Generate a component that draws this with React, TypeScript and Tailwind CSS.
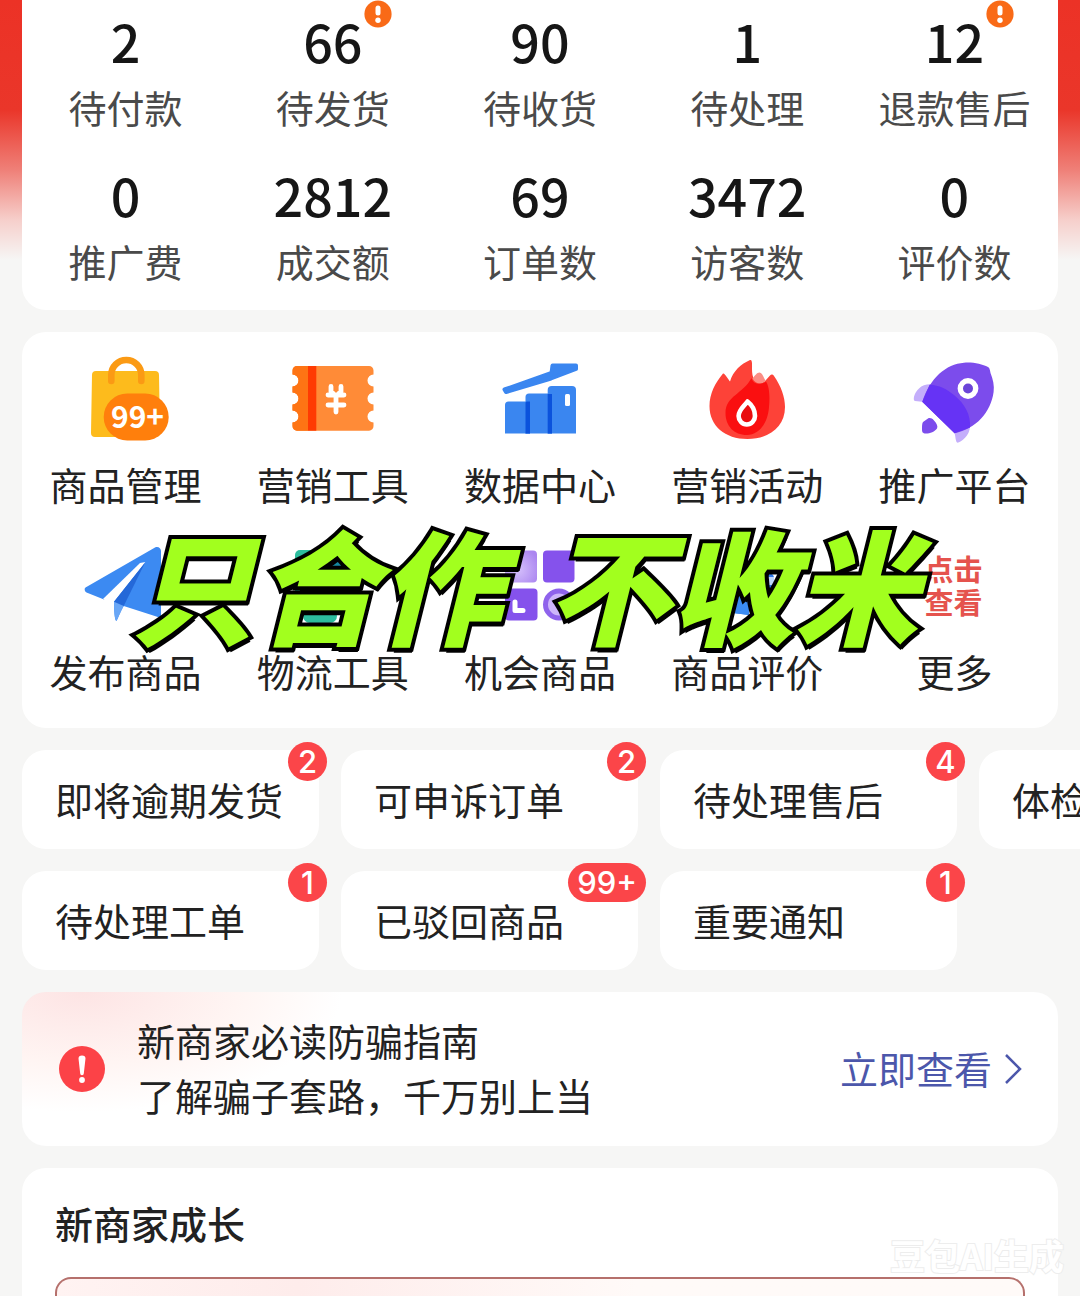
import type { ReactNode } from 'react'

type Stat = { value: string; label: string; alert?: boolean }

const stats: Stat[] = [
  { value: '2', label: '待付款' },
  { value: '66', label: '待发货', alert: true },
  { value: '90', label: '待收货' },
  { value: '1', label: '待处理' },
  { value: '12', label: '退款售后', alert: true },
  { value: '0', label: '推广费' },
  { value: '2812', label: '成交额' },
  { value: '69', label: '订单数' },
  { value: '3472', label: '访客数' },
  { value: '0', label: '评价数' },
]

const todoRows = [
  [
    { label: '即将逾期发货', badge: '2' },
    { label: '可申诉订单', badge: '2' },
    { label: '待处理售后', badge: '4' },
    { label: '体检中心', badge: '' },
  ],
  [
    { label: '待处理工单', badge: '1' },
    { label: '已驳回商品', badge: '99+' },
    { label: '重要通知', badge: '1' },
  ],
]

function Icon({ children }: { children: ReactNode }) {
  return (
    <svg viewBox="0 0 88 88" className="w-22 h-22 overflow-visible" aria-hidden="true">
      {children}
    </svg>
  )
}

function BagIcon() {
  return (
    <Icon>
      <path d="M14 15H73a4 4 0 0 1 4 4L78 77a4 4 0 0 1-4 4H13a4 4 0 0 1-4-4L10 19a4 4 0 0 1 4-4Z" fill="#fdbb1c" />
      <path d="M29.300 25V19a15 15 0 0 1 30 0V25" fill="none" stroke="#fb9a14" strokeWidth="6.600" strokeLinecap="round" />
      <rect x="21.700" y="37.500" width="65" height="47" rx="23.500" fill="#ff7f0c" />
      <text x="55.500" y="72" textAnchor="middle" fill="#fff" fontSize="30" fontWeight="700" fontFamily="Noto Sans CJK SC, sans-serif">
        99+
      </text>
    </Icon>
  )
}

function TicketIcon() {
  return (
    <Icon>
      <path
        d="M8 10H80a4.500 4.500 0 0 1 4.500 4.500V18.500a6 6 0 0 0 0 12v6a6 6 0 0 0 0 12v6a6 6 0 0 0 0 12V70a4.500 4.500 0 0 1-4.500 4.700H8a4.500 4.500 0 0 1-4.500-4.700V66.500a6 6 0 0 0 0-12v-6a6 6 0 0 0 0-12v-6a6 6 0 0 0 0-12V14.500A4.500 4.500 0 0 1 8 10Z"
        fill="#ff8b37"
      />
      <path
        d="M19 10H8a4.500 4.500 0 0 0-4.500 4.500V18.500a6 6 0 0 1 0 12v6a6 6 0 0 1 0 12v6a6 6 0 0 1 0 12V70A4.500 4.500 0 0 0 8 74.700H19Z"
        fill="#fe7414"
      />
      <rect x="19" y="10" width="8.300" height="64.700" fill="#ff3b02" />
      <path d="M42 30.500V35L45 38.500M52 30.500V35L49 38.500M39 39H55M39 49H55M47 39V56" fill="none" stroke="#fff" strokeWidth="4.800" strokeLinecap="round" />
    </Icon>
  )
}

function ChartIcon() {
  return (
    <Icon>
      <path d="M9 77.500V49a3.500 3.500 0 0 1 3.500-3.500H34V77.500Z" fill="#3a86f0" />
      <path d="M29.500 77.500V41a3.500 3.500 0 0 1 3.500-3.500H56V77.500Z" fill="#3a86f0" />
      <path d="M51.700 77.500V34a4 4 0 0 1 4-4H76a4 4 0 0 1 4 4V77.500Z" fill="#3a86f0" />
      <path d="M29.500 77.500V46.500l1-1H34V77.500ZM51.700 77.500V38H56V77.500Z" fill="#0b52dc" />
      <rect x="69" y="38" width="5" height="12" rx="1.500" fill="#fff" />
      <path d="M8.500 33.500 55.500 17 56.500 9.500H80V13L55 22.500 10 36Z" fill="#3a86f0" stroke="#3a86f0" strokeWidth="4" strokeLinejoin="round" />
    </Icon>
  )
}

function FlameIcon() {
  return (
    <Icon>
      <path
        d="M20 17.500C21.500 16.500 25 23 27 25.500C30 15 38 8 47 4C49.500 3.500 49 8 49 13C49 17 49.500 21 51.500 24C54 27.500 60 27.500 62.500 24.500L67 19.500C68.500 18 70 18.500 71 20C78 30 82 41 82 51C82 71 66 83 44.500 83C22 83 6.500 70 6.500 50C6.500 38 12 27 20 17.500Z"
        fill="#fd4238"
      />
      <path d="M49.500 22.500C52 19.500 54 16.500 56.500 16.500C59 16.500 60.500 21 62.500 24.500C59 29 53 28.500 49.500 22.500Z" fill="#fb8d85" />
      <path d="M48.500 22C50 28.500 58 29.500 63 25.500C66.500 31 67 41 66 51C65 67 56 79 44 79C31 79 22.500 70 22.500 57C22.500 40 40 38 48.500 22Z" fill="#fa0f10" />
      <path d="M44.500 45.500C49 49 52 54 52 60a8.200 8.500 0 0 1-16.400 0C35.600 54 40.500 51 44.500 45.500Z" fill="#e90d10" stroke="#fff" strokeWidth="4.600" strokeLinejoin="round" />
    </Icon>
  )
}

function RocketIcon() {
  return (
    <Icon>
      <path d="M12 45.700L5 45C2.500 44.500 4 37 9 32.500C13 28.500 19 27.500 26 29L52 62L60 70C60 80 51 86 47.500 86.700C45.500 86.500 45.500 80 44.600 77.300Z" fill="#c4aefb" />
      <path d="M12.300 45.700C20 22 36 8 54 6.700C63 6 72 8 78 11C80 12 80 15 80.500 17C83 23 84.500 30 83.600 36C81 56 66 73 44.600 77.300Z" fill="#7c4cec" />
      <path d="M12.300 45.700L19.600 28.700C29 29 37 33 44 39C55 48 61 59 60 71.500L44.600 77.300Z" fill="#6633f5" />
      <circle cx="58" cy="32.500" r="7.700" fill="#6b44d8" stroke="#fff" strokeWidth="5.400" />
      <path d="M13 66L18 62.500C19.500 61.500 22 62 24 64.500C27 67.500 28 70.500 27 72.500C25 75.500 20 77.500 16 77.500C12.500 77.500 12 76 12 73C12 70 12 67.500 13 66Z" fill="#7c4cec" />
    </Icon>
  )
}

function PlaneIcon() {
  return (
    <Icon>
      <path d="M3.500 44.500L73 4.500C76 3 79 5 79 8V75L41.700 63C38 68 37 74 34.400 78C32.500 77 32 66 32 58.700L63.400 19L22 56.500L4.500 49.500C2.500 48.500 2 45.500 3.500 44.500Z" fill="#3c8af2" />
      <path d="M63.400 19L58 20L21 56L31 59Z" fill="#fff" />
      <path d="M63.400 19L32 58.700L34 62L41.700 63Z" fill="#2468d8" />
      <path d="M32 58.700L41.700 63L34.400 78C32.500 77 32 66 32 58.700Z" fill="#68a6f6" />
    </Icon>
  )
}

function TruckIcon() {
  return (
    <Icon>
      <rect x="6" y="7" width="66" height="62" rx="5" fill="#2dbd9e" />
      <rect x="36" y="10" width="24" height="24" rx="3" fill="#1688a0" />
      <rect x="14" y="66" width="34" height="14" rx="7" fill="#2dbd9e" />
    </Icon>
  )
}

function TilesIcon() {
  return (
    <Icon>
      <defs>
        <radialGradient id="tile" cx="0.4" cy="0.6" r="0.7">
          <stop offset="0" stopColor="#d5c0fb" />
          <stop offset="1" stopColor="#ab86f0" />
        </radialGradient>
      </defs>
      <rect x="9" y="7.500" width="32" height="32" rx="4" fill="url(#tile)" />
      <rect x="47" y="7.500" width="31.500" height="32" rx="4" fill="#8552ec" />
      <rect x="9" y="45.500" width="32.500" height="32" rx="4" fill="#8552ec" />
      <circle cx="63" cy="61.500" r="13.500" fill="#cdb6fa" stroke="#8f63ec" strokeWidth="5" />
      <path d="M19 59V67.500H27" fill="none" stroke="#fff" strokeWidth="5" strokeLinecap="round" strokeLinejoin="round" />
    </Icon>
  )
}

function ReviewIcon() {
  return (
    <Icon>
      <path d="M34 30H66a5 5 0 0 1 5 5V54H46V72L30 70V34a4 4 0 0 1 4-4Z" fill="#2f78e6" />
      <rect x="57" y="34" width="14" height="8" fill="#bdd7fb" />
      <path d="M30 54H46V72L30 70Z" fill="#3b8bf3" />
    </Icon>
  )
}

function MoreIcon() {
  return (
    <span className="flex h-22 w-15 flex-col justify-center pb-1 text-[29px] leading-[33px] font-bold text-[#e5534d]">
      <span>点击</span>
      <span>查看</span>
    </span>
  )
}

const tools = [
  { label: '商品管理', icon: <BagIcon /> },
  { label: '营销工具', icon: <TicketIcon /> },
  { label: '数据中心', icon: <ChartIcon /> },
  { label: '营销活动', icon: <FlameIcon /> },
  { label: '推广平台', icon: <RocketIcon /> },
  { label: '发布商品', icon: <PlaneIcon /> },
  { label: '物流工具', icon: <TruckIcon /> },
  { label: '机会商品', icon: <TilesIcon /> },
  { label: '商品评价', icon: <ReviewIcon /> },
  { label: '更多', icon: <MoreIcon /> },
]

function StatCell({ value, label, alert }: Stat) {
  return (
    <a href="#stats" className="flex flex-col items-center">
      <span className="relative text-[52px] leading-[60px] font-medium text-[#161616]">
        {value}
        {alert && (
          <svg viewBox="0 0 28 28" className="absolute -top-[11px] left-full ml-0.5 h-7 w-7" aria-hidden="true">
            <circle cx="14" cy="14" r="13.600" fill="#f96a17" />
            <path d="M14 8V13" stroke="#fff" strokeWidth="5" strokeLinecap="round" />
            <circle cx="14" cy="20.300" r="2.700" fill="#fff" />
          </svg>
        )}
      </span>
      <span className="mt-3 leading-[48px] text-[#4a4a4a]">{label}</span>
    </a>
  )
}

export default function App() {
  return (
    <main
      lang="zh-CN"
      className="relative flex min-h-screen flex-col gap-[22px] overflow-hidden bg-[#f6f6f5] bg-[linear-gradient(to_bottom,#ec3226_0,#ea362a_110px,#ef8078_170px,#f6cfcb_220px,#f6f6f500_260px)] px-[22px] font-['Noto_Sans_CJK_SC',sans-serif] text-[38px] font-normal text-[#222]"
    >
      <section className="grid grid-cols-5 gap-y-[34px] rounded-b-3xl bg-white pt-[11px] pb-[25px]">
        {stats.map(stat => (
          <StatCell key={stat.label} {...stat} />
        ))}
      </section>

      <section className="relative grid grid-cols-5 gap-y-[35px] rounded-3xl bg-white pt-6 pb-[33px]">
        {tools.map(tool => (
          <a key={tool.label} href="#tools" className="flex flex-col items-center gap-4">
            {tool.icon}
            <span className="leading-[48px]">{tool.label}</span>
          </a>
        ))}
        <p className="pointer-events-none absolute inset-x-0 top-[178px] flex justify-center gap-11 pr-8 text-[124px] leading-[144px] font-black whitespace-nowrap text-[#a2ff1e] italic [-webkit-text-stroke:8px_#000] [paint-order:stroke_fill] [text-shadow:2px_5px_0_#000]">
          <span>只合作</span>
          <span>不收米</span>
        </p>
      </section>

      {/* Pending task chips */}
      {todoRows.map((row, i) => (
        <nav key={i} className="flex gap-[22px]">
          {row.map(item => (
            <button
              key={item.label}
              type="button"
              className="relative w-[297px] shrink-0 rounded-3xl bg-white pt-[23px] pb-[25px] pl-[33px] text-left leading-[51px] whitespace-nowrap"
            >
              {item.label}
              {item.badge && (
                <span className="absolute -top-2 -right-2 h-[39px] min-w-[39px] rounded-full bg-[#fb4549] px-[9px] text-center font-[Inter,sans-serif] text-[31px] leading-[39px] font-medium text-white">
                  {item.badge}
                </span>
              )}
            </button>
          ))}
        </nav>
      ))}

      <section className="flex items-center rounded-3xl bg-white bg-[radial-gradient(ellipse_260px_120px_at_60px_0,#fde4e4,#fff5f3_60%,#ffffff00)] py-5 pr-[34px] pl-[37px]">
        <svg viewBox="0 0 46 46" className="h-[46px] w-[46px]" aria-hidden="true">
          <circle cx="23" cy="23" r="23" fill="#fc4247" />
          <path d="M19.500 12.500a3.500 3 0 0 1 7 0L24.800 27.500a1.800 1.800 0 0 1-3.600 0Z" fill="#fff" />
          <circle cx="23" cy="34" r="2.900" fill="#fff" />
        </svg>
        <p className="ml-8 flex-1 pb-1 leading-[55px]">
          新商家必读防骗指南
          <br />
          了解骗子套路，千万别上当
        </p>
        <a href="#guide" className="flex items-center gap-2 leading-[55px] text-[#4c57ab]">
          <span className="pb-1">立即查看</span>
          <svg viewBox="0 0 24 32" className="h-8 w-6" fill="none" aria-hidden="true">
            <path d="M6 2 20 16 6 30" stroke="currentColor" strokeWidth="2.500" />
          </svg>
        </a>
      </section>

      <section className="flex flex-1 flex-col rounded-t-3xl bg-white px-[33px] pt-[27px]">
        <h2 className="leading-[55px] font-medium">新商家成长</h2>
        <div className="mt-[27px] min-h-5 flex-1 rounded-t-2xl border-2 border-b-0 border-[#b5706c] bg-linear-to-r from-[#fff3f2] via-[#feeceb] via-25% to-[#fffaf8] to-60%" />
      </section>

      <span className="absolute right-4 bottom-[18px] text-[35px] leading-[48px] font-bold text-white [-webkit-text-stroke:2px_#ededed] [paint-order:stroke_fill]">
        豆包AI生成
      </span>
    </main>
  )
}
